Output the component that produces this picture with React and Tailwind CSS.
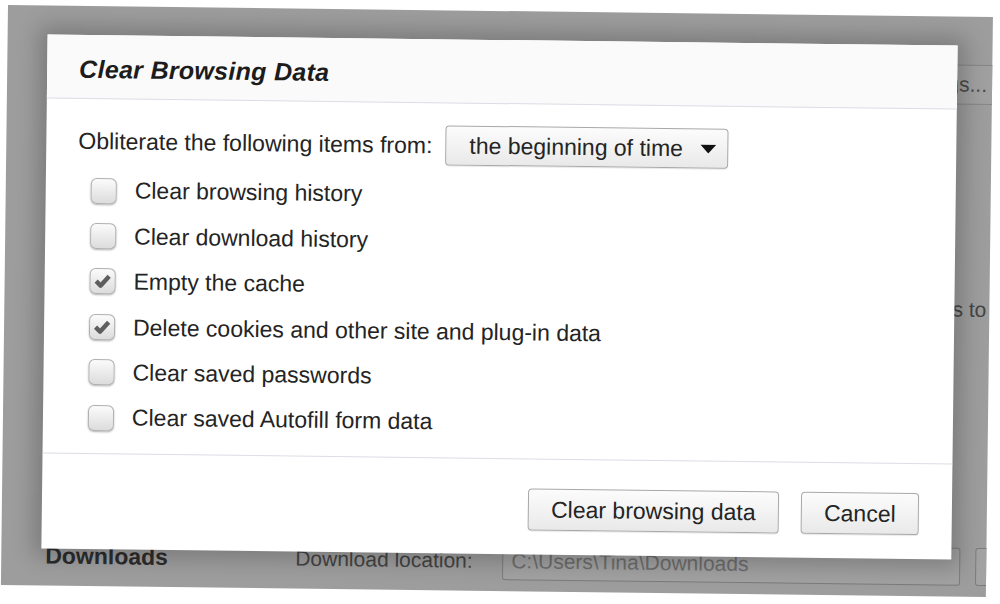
import React from 'react';

const ITEMS = [
  { label: 'Clear browsing history', checked: false },
  { label: 'Clear download history', checked: false },
  { label: 'Empty the cache', checked: true },
  { label: 'Delete cookies and other site and plug-in data', checked: true },
  { label: 'Clear saved passwords', checked: false },
  { label: 'Clear saved Autofill form data', checked: false },
];

function Checkbox({ checked }) {
  return (
    <span className="w-[26px] h-[26px] shrink-0 rounded-[6px] border border-[#b0b0b0] bg-gradient-to-b from-[#fbfbfb] to-[#dcdcdc] shadow-[0_1px_2px_rgba(0,0,0,0.3)] flex items-center justify-center">
      {checked && (
        <svg width="20" height="20" viewBox="0 0 20 20">
          <path d="M3.5 10 L8 14.5 L16.5 5" fill="none" stroke="#5e5e5e" strokeWidth="4.4" strokeLinejoin="round" />
        </svg>
      )}
    </span>
  );
}

export default function App() {
  return (
    <div className="min-h-[604px] bg-white pt-[5px] pl-[8px] overflow-hidden font-['Liberation_Sans',Arial,sans-serif]">
      <div className="relative w-[985px] h-[580px] bg-[#9d9d9d] origin-top-left rotate-[0.7deg] overflow-hidden">
        {/* Dimmed settings page behind the dialog */}
        <div className="flex flex-col h-full text-[#3a3a3a]">
          <div className="flex justify-end mt-[48px] mr-[-10px]">
            <div className="h-[40px] flex items-center pl-4 pr-[14px] border border-[#858585] rounded-[3px] bg-[#a0a0a0] text-[21px] text-[#4a4a4a]">
              Content settings...
            </div>
          </div>
          <div className="flex justify-end mt-[189px] pr-[3px] whitespace-nowrap text-[21px] text-[#454545]">
            Google Chrome may use web services to
          </div>
          <div className="mt-auto mb-[10px] h-[40px] flex items-center whitespace-nowrap">
            <div className="w-[294px] shrink-0 pl-[44px] text-[23px] font-bold text-[#2c2c2c]">Downloads</div>
            <div className="w-[207px] shrink-0 text-[21px] text-[#444]">Download location:</div>
            <div className="w-[458px] h-[38px] shrink-0 flex items-center pl-2 border border-[#7c7c7c] rounded-[3px] bg-[#a2a2a2] text-[21px] text-[#6e6e6e]">
              C:\Users\Tina\Downloads
            </div>
            <div className="ml-[15px] w-[40px] h-[38px] shrink-0 border border-[#7c7c7c] rounded-[3px] bg-[#a2a2a2]" />
          </div>
        </div>

        {/* Dialog */}
        <div className="absolute left-[40px] top-[29px] w-[910px] h-[514px] bg-white flex flex-col shadow-[0_0_22px_8px_rgba(0,0,0,0.22)] text-[#242424]">
          <div className="h-[64px] shrink-0 flex items-center pl-[32px] pt-[6px] bg-[#fafafa] border-b border-[#dcdde6]">
            <h1 className="text-[25px] font-bold italic tracking-[0.3px] text-[#1c1c1c]">Clear Browsing Data</h1>
          </div>

          <div className="flex-1 flex flex-col border-b border-[#dcdde6]">
            <div className="mt-[22px] h-[40px] flex items-center pl-[32px] gap-[13px] text-[23px]">
              <span>Obliterate the following items from:</span>
              <div className="w-[283px] h-[40px] flex items-center justify-between pl-[23px] pr-[11px] rounded-[4px] border border-[#a8a8a8] bg-gradient-to-b from-[#fcfcfc] to-[#e9e9e9] shadow-[0_1px_1px_rgba(0,0,0,0.1)]">
                <span>the beginning of time</span>
                <svg width="16" height="9" viewBox="0 0 16 9">
                  <polygon points="0,0 16,0 8,9" fill="#111" />
                </svg>
              </div>
            </div>

            <div className="mt-[7px] flex flex-col">
              {ITEMS.map(({ label, checked }) => (
                <label key={label} className="h-[45.4px] flex items-center pl-[45px] gap-[18px] text-[23px]">
                  <Checkbox checked={checked} />
                  <span>{label}</span>
                </label>
              ))}
            </div>
          </div>

          <div className="h-[95px] shrink-0 flex justify-end items-start pt-[29px] pr-[33px] gap-[22px] text-[23px]">
            <button className="w-[251px] h-[42px] rounded-[4px] border border-[#a8a8a8] bg-gradient-to-b from-[#fcfcfc] to-[#e9e9e9] shadow-[0_1px_1px_rgba(0,0,0,0.1)] text-[#242424]">
              Clear browsing data
            </button>
            <button className="w-[118px] h-[42px] rounded-[4px] border border-[#a8a8a8] bg-gradient-to-b from-[#fcfcfc] to-[#e9e9e9] shadow-[0_1px_1px_rgba(0,0,0,0.1)] text-[#242424]">
              Cancel
            </button>
          </div>
        </div>
      </div>
    </div>
  );
}
